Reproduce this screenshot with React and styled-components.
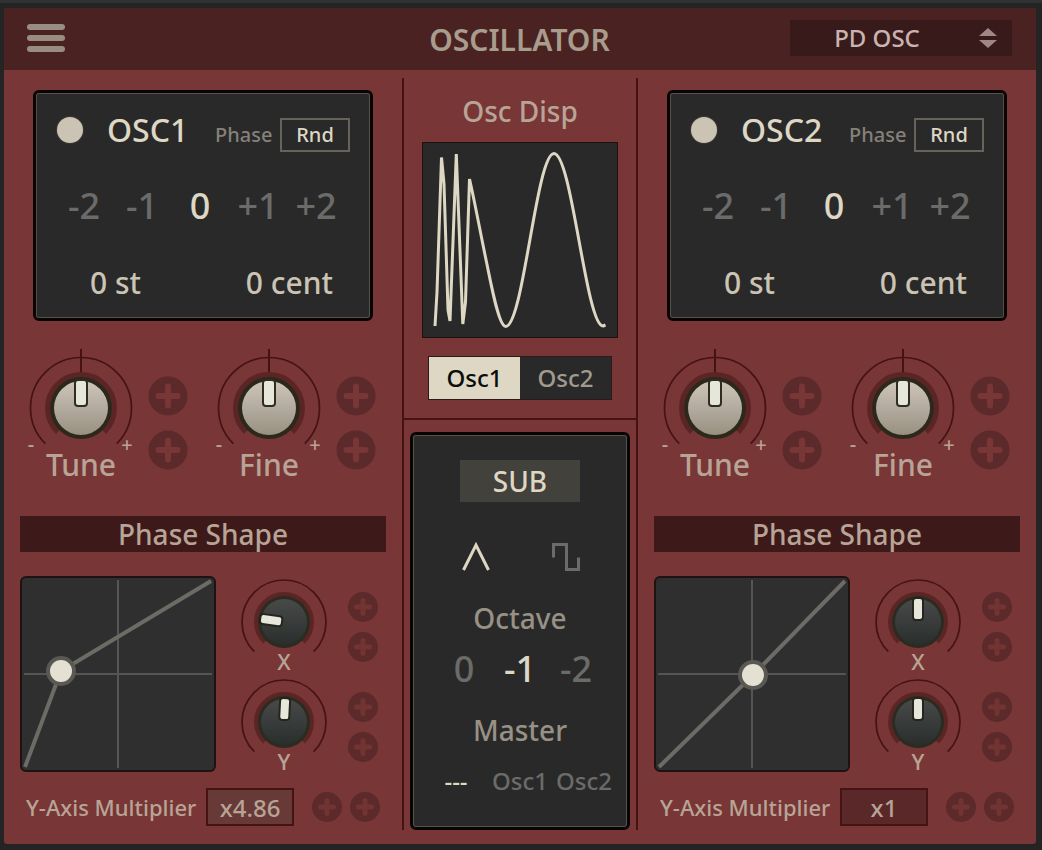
import React, { useState } from 'react';
import styled, { createGlobalStyle, css } from 'styled-components';

const c = {
  red: '#793636',
  redDark: '#5c2a2a',
  header: '#4a2222',
  line: '#461313',
  panel: '#292929',
  cream: '#ddd7c4',
  creamDim: '#cbc3b3',
  label: '#b8a496',
  grey: '#6b6b69',
};

const GlobalStyle = createGlobalStyle`
  *, *::before, *::after { box-sizing: border-box; }
  body {
    margin: 0;
    background: #242424;
    font-family: "Noto Sans", "Open Sans", sans-serif;
    font-weight: 500;
    color: ${c.label};
  }
  button, select, input { font: inherit; color: inherit; margin: 0; }
  button { border: 0; padding: 0; background: none; cursor: pointer; }
  svg { display: block; overflow: visible; }
  fieldset { border: 0; margin: 0; padding: 0; min-width: 0; }
`;

const Page = styled.div`
  min-height: 100vh;
  padding: 5px 6px 6px 4px;
  border-top: 3px solid #2e3232;
`;

const Module = styled.main`
  min-width: 1032px;
  background: ${c.red};
  border-radius: 0 0 3px 3px;
`;

const Header = styled.header`
  display: grid;
  grid-template-columns: 1fr auto 1fr;
  align-items: center;
  height: 62px;
  padding: 0 24px 2px 23px;
  background: ${c.header};
`;

const MenuButton = styled.button`
  display: flex;
  flex-direction: column;
  gap: 5px;
  width: 38px;

  span {
    height: 6px;
    border-radius: 3px;
    background: #988d80;
  }
`;

const Title = styled.h1`
  margin: 0;
  padding-top: 3px;
  font-size: 30px;
  line-height: 36px;
  font-weight: 600;
  color: #a89c8c;
`;

const SelectBox = styled.div`
  position: relative;
  justify-self: end;
  width: 222px;

  select {
    display: block;
    width: 100%;
    height: 36px;
    padding: 0 48px 0 0;
    border: 0;
    border-radius: 0;
    appearance: none;
    background: #381a1a;
    color: #c8b4b0;
    font-size: 24px;
    line-height: 36px;
    text-align: center;
    text-align-last: center;
  }

  svg {
    position: absolute;
    top: 8px;
    right: 15px;
    pointer-events: none;
  }
`;

const Columns = styled.div`
  display: grid;
  grid-template-columns: 1fr 236px 1fr;
  padding-bottom: 14px;
`;

const OscColumn = styled.section`
  display: flex;
  flex-direction: column;
  padding: 20px 16px 0;
`;

const CenterColumn = styled.section`
  display: flex;
  flex-direction: column;
  align-items: center;
  margin-top: 8px;
  border-left: 2px solid ${c.line};
  border-right: 2px solid ${c.line};
`;

const panelFrame = css`
  background: ${c.panel};
  border: 2px solid #080404;
  border-radius: 6px;
  box-shadow: inset 0 0 0 1px #080404, inset 0 0 0 2px #56504b;
`;

const OscPanel = styled.div`
  ${panelFrame}
  height: 231px;
  margin: 0 13px;
  padding: 20px 20px 0;
`;

const OscHead = styled.div`
  display: flex;
  align-items: center;
  height: 36px;
  padding-left: 2px;
`;

const Power = styled.input`
  appearance: none;
  width: 26px;
  height: 26px;
  border-radius: 50%;
  background: ${c.creamDim};
  box-shadow: 0 0 0 1px #3c3934;
  opacity: ${(p) => (p.checked ? 1 : 0.4)};
`;

const OscName = styled.label`
  width: 132px;
  padding-left: 24px;
  font-size: 32px;
  line-height: 36px;
  color: ${c.cream};
`;

const PhaseLabel = styled.span`
  width: 65px;
  padding-top: 10px;
  font-size: 20px;
  line-height: 26px;
  color: #85817a;
`;

const RndButton = styled.button`
  width: 70px;
  height: 34px;
  margin-top: 10px;
  border: 2px solid #67635b;
  font-size: 20px;
  line-height: 30px;
  color: ${c.cream};
`;

const Choices = styled.fieldset`
  display: grid;
  grid-template-columns: repeat(${(p) => p.$count}, ${(p) => p.$pitch}px);
  justify-content: ${(p) => p.$align || 'center'};
  font-size: ${(p) => p.$size}px;
  line-height: 44px;
`;

const Choice = styled.label`
  position: relative;
  display: grid;
  place-items: center;
  height: 44px;
  white-space: nowrap;
  cursor: pointer;
  color: ${(p) => (p.$on ? c.cream : c.grey)};

  input {
    position: absolute;
    inset: 0;
    width: 100%;
    height: 100%;
    opacity: 0;
  }
`;

const OctaveArea = styled.div`
  margin-top: 36px;
`;

const TuneValues = styled.div`
  display: flex;
  justify-content: space-between;
  margin-top: 37px;
  padding: 0 18px 0 35px;
  font-size: 30px;
  line-height: 36px;
  color: ${c.creamDim};
`;

const KnobRow = styled.div`
  display: flex;
  justify-content: space-between;
  margin-top: 26px;
  padding: 0 10px 0 9px;
`;

const KnobGroup = styled.div`
  display: flex;
  gap: ${(p) => p.$gap}px;
`;

const KnobLabel = styled.label`
  position: relative;
  display: block;
  text-align: center;
  font-size: ${(p) => (p.$small ? 22 : 30)}px;
  line-height: ${(p) => (p.$small ? 18 : 36)}px;

  input {
    position: absolute;
    inset: 0;
    width: 100%;
    height: 100%;
    opacity: 0;
    cursor: pointer;
  }
`;

const PlusColumn = styled.div`
  display: flex;
  flex-direction: column;
  gap: ${(p) => p.$gap}px;
  padding-top: ${(p) => p.$top}px;
`;

const SectionBar = styled.h2`
  margin: 33px 0 24px;
  height: 36px;
  background: #3d1a19;
  font-size: 28px;
  line-height: 36px;
  font-weight: 500;
  text-align: center;
`;

const ShapeRow = styled.div`
  display: flex;
  align-items: flex-start;
  gap: 25px;
  height: 196px;
`;

const PadFrame = styled.div`
  width: 196px;
  height: 196px;
  border: 2px solid #1f1212;
  border-radius: 6px;
  background: #2f2f2f;
`;

const SmallKnobs = styled.div`
  display: flex;
  flex-direction: column;
  gap: 8px;
  padding-top: 2px;
`;

const MultiplierRow = styled.div`
  display: flex;
  align-items: center;
  margin-top: 16px;
  padding-left: 6px;
`;

const MultiplierLabel = styled.label`
  width: 180px;
  font-size: 22px;
  line-height: 38px;
`;

const MultiplierInput = styled.input`
  width: 88px;
  height: 38px;
  padding: 0;
  border: 2px solid ${c.line};
  border-radius: 0;
  background: ${(p) => (p.$lit ? '#673a38' : '#5a2828')};
  font-size: 24px;
  line-height: 34px;
  text-align: center;
`;

const PlusPair = styled.div`
  display: flex;
  gap: 8px;
  margin-left: 18px;
`;

const DisplayTitle = styled.h2`
  margin: 15px 0 13px;
  font-size: 28px;
  line-height: 36px;
  font-weight: 500;
`;

const Scope = styled.div`
  width: 196px;
  height: 196px;
  border: 1px solid #1f1010;
  background: ${c.panel};
`;

const Tabs = styled.div`
  display: grid;
  grid-template-columns: 1fr 1fr;
  width: 184px;
  height: 44px;
  margin-top: 18px;
  border: 1px solid #2b1a1a;
  background: ${c.panel};
`;

const Tab = styled.button`
  font-size: 24px;
  line-height: 42px;
  background: ${(p) => (p.$on ? c.cream : c.panel)};
  color: ${(p) => (p.$on ? '#0c0c0a' : '#a09b90')};
`;

const Divider = styled.hr`
  width: 100%;
  height: 2px;
  margin: 18px 0 12px;
  border: 0;
  background: ${c.line};
`;

const SubPanel = styled.div`
  ${panelFrame}
  display: flex;
  flex-direction: column;
  align-items: center;
  width: 220px;
  height: 398px;
  padding-top: 26px;
`;

const SubButton = styled.button`
  width: 120px;
  height: 42px;
  margin-bottom: 33px;
  background: #43413b;
  font-size: 28px;
  line-height: 42px;
  color: ${c.cream};
`;

const SubHeading = styled.h3`
  margin: 21px 0 11px;
  font-size: 28px;
  line-height: 36px;
  font-weight: 500;
  color: #989185;
`;

const polar = (cx, cy, r, deg) => {
  const a = ((deg - 90) * Math.PI) / 180;
  return `${(cx + r * Math.cos(a)).toFixed(2)} ${(cy + r * Math.sin(a)).toFixed(2)}`;
};

const arc = (cx, cy, r, from, to) =>
  `M${polar(cx, cy, r, from)} A${r} ${r} 0 1 1 ${polar(cx, cy, r, to)}`;

function BigKnob({ label, id }) {
  return (
    <KnobLabel>
      <svg width="104" height="100" viewBox="0 0 104 100" aria-hidden="true">
        <defs>
          <linearGradient id={`${id}-face`} x1="0" y1="0" x2="0" y2="1">
            <stop offset="0" stopColor="#cdc6b8" />
            <stop offset="0.5" stopColor="#b3ab9f" />
            <stop offset="1" stopColor="#98907f" />
          </linearGradient>
        </defs>
        <path d={arc(52, 61, 50.5, -135, 135)} fill="none" stroke={c.line} strokeWidth="1.7" />
        <path d="M52 2V26" stroke={c.line} strokeWidth="2" />
        <path d={arc(52, 61, 33, -136, 136)} fill="none" stroke="#5c2525" strokeWidth="6" />
        <circle cx="52" cy="61" r="31" fill="#2c291c" />
        <circle cx="52" cy="61" r="27" fill={`url(#${id}-face)`} />
        <rect x="46" y="33" width="12" height="26" rx="3" fill="#e6e6da" stroke="#2f2c20" strokeWidth="2" />
        <g fill={c.label} fontSize="20" textAnchor="middle">
          <text x="2" y="104">-</text>
          <text x="98" y="105">+</text>
        </g>
      </svg>
      {label}
      <input type="range" min="-100" max="100" defaultValue="0" />
    </KnobLabel>
  );
}

function SmallKnob({ label, id, angle }) {
  return (
    <KnobLabel $small>
      <svg width="86" height="74" viewBox="0 0 86 74" aria-hidden="true">
        <defs>
          <linearGradient id={`${id}-face`} x1="0" y1="0" x2="0" y2="1">
            <stop offset="0" stopColor="#484a4a" />
            <stop offset="1" stopColor="#292e2c" />
          </linearGradient>
        </defs>
        <path d={arc(43, 44, 42, -135, 135)} fill="none" stroke={c.line} strokeWidth="1.7" />
        <path d={arc(43, 44, 27, -136, 136)} fill="none" stroke="#5c2525" strokeWidth="6" />
        <circle cx="43" cy="44" r="26" fill="#2b2c1f" />
        <circle cx="43" cy="44" r="23" fill={`url(#${id}-face)`} />
        <rect
          x="38" y="20" width="10" height="22" rx="3"
          fill="#e6e6da" stroke="#24251c" strokeWidth="2"
          transform={`rotate(${angle} 43 44)`}
        />
      </svg>
      {label}
      <input type="range" min="-135" max="135" defaultValue={angle} />
    </KnobLabel>
  );
}

function Plus({ size, label }) {
  const big = size > 30;
  return (
    <button type="button" aria-label={label}>
      <svg width={size} height={size} viewBox={`0 0 ${size} ${size}`}>
        <circle cx={size / 2} cy={size / 2} r={big ? 19.5 : 15} fill={c.redDark} />
        <path
          d={big ? 'M20 10.5V29.5M10.5 20H29.5' : 'M15 8.5V21.5M8.5 15H21.5'}
          stroke={big ? c.red : '#723333'}
          strokeWidth={big ? 6 : 5}
          strokeLinecap="round"
        />
      </svg>
    </button>
  );
}

function ChoiceSet({ name, label, options, initial, pitch, size, align }) {
  const [value, setValue] = useState(initial);
  return (
    <Choices $count={options.length} $pitch={pitch} $size={size} $align={align} aria-label={label}>
      {options.map((o) => {
        const key = o.key || o;
        return (
          <Choice key={key} $on={value === key}>
            {o.icon || o}
            <input
              type="radio"
              name={name}
              aria-label={key}
              checked={value === key}
              onChange={() => setValue(key)}
            />
          </Choice>
        );
      })}
    </Choices>
  );
}

function PhasePad({ x, y }) {
  return (
    <PadFrame>
      <svg width="192" height="192" viewBox="2 2 192 192" role="img" aria-label="Phase shape curve">
        <path d="M98 4V192M4 98H192" stroke="#555553" strokeWidth="2" />
        <path d={`M5 191L${x} ${y}L191 5`} fill="none" stroke="#6d6b65" strokeWidth="4" />
        <circle cx={x} cy={y} r="15" fill="#5a5852" />
        <circle cx={x} cy={y} r="11" fill="#e4e0d2" />
      </svg>
    </PadFrame>
  );
}

function Oscillator({ n, node, xAngle, yAngle, multiplier, lit }) {
  const id = `osc${n}`;
  const [on, setOn] = useState(true);
  return (
    <OscColumn>
      <OscPanel>
        <OscHead>
          <Power id={`${id}-power`} type="checkbox" checked={on} onChange={() => setOn(!on)} />
          <OscName htmlFor={`${id}-power`}>OSC{n}</OscName>
          <PhaseLabel id={`${id}-phase`}>Phase</PhaseLabel>
          <RndButton type="button">Rnd</RndButton>
        </OscHead>
        <OctaveArea>
          <ChoiceSet
            name={`${id}-octave`}
            label="Octave"
            options={['-2', '-1', '0', '+1', '+2']}
            initial="0"
            pitch={58}
            size={36}
            align="start"
          />
        </OctaveArea>
        <TuneValues>
          <span>0 st</span>
          <span>0 cent</span>
        </TuneValues>
      </OscPanel>

      <KnobRow>
        {['Tune', 'Fine'].map((name) => (
          <KnobGroup key={name} $gap={15}>
            <BigKnob label={name} id={`${id}-${name}`} />
            <PlusColumn $gap={14} $top={29}>
              <Plus size={40} label={`Add ${name} modulation 1`} />
              <Plus size={40} label={`Add ${name} modulation 2`} />
            </PlusColumn>
          </KnobGroup>
        ))}
      </KnobRow>

      <SectionBar>Phase Shape</SectionBar>

      <ShapeRow>
        <PhasePad x={node[0]} y={node[1]} />
        <SmallKnobs>
          {[['X', xAngle], ['Y', yAngle]].map(([name, angle]) => (
            <KnobGroup key={name} $gap={21}>
              <SmallKnob label={name} id={`${id}-${name}`} angle={angle} />
              <PlusColumn $gap={10} $top={14}>
                <Plus size={30} label={`Add ${name} modulation 1`} />
                <Plus size={30} label={`Add ${name} modulation 2`} />
              </PlusColumn>
            </KnobGroup>
          ))}
        </SmallKnobs>
      </ShapeRow>

      <MultiplierRow>
        <MultiplierLabel htmlFor={`${id}-mult`}>Y-Axis Multiplier</MultiplierLabel>
        <MultiplierInput id={`${id}-mult`} type="text" defaultValue={multiplier} $lit={lit} />
        <PlusPair>
          <Plus size={30} label="Add multiplier modulation 1" />
          <Plus size={30} label="Add multiplier modulation 2" />
        </PlusPair>
      </MultiplierRow>
    </OscColumn>
  );
}

const triangleIcon = (
  <svg width="28" height="30" viewBox="0 0 28 30" fill="none" stroke="currentColor" strokeWidth="3">
    <path d="M2.5 28L15 3L27.5 28" />
  </svg>
);

const squareIcon = (
  <svg width="28" height="30" viewBox="0 0 28 30" fill="none" stroke="currentColor" strokeWidth="3">
    <path d="M2.5 15.5V2.5H15.5V27.5H27.5V15.5" />
  </svg>
);

function Center() {
  const [shown, setShown] = useState(1);
  return (
    <CenterColumn>
      <DisplayTitle>Osc Disp</DisplayTitle>
      <Scope>
        <svg width="194" height="194" viewBox="1 1 194 194" role="img" aria-label="Oscillator waveform">
          <path
            d="M13 184L15 150L19.5 15.5L22 42L26 168L28 179L34.3 12L40.8 182L43.5 160L47.5 37C52 56 59 94 64.7 121C70 147 77 184.5 83.7 184.5C101.3 184.5 114.4 11.5 132 11.5C149.9 11.5 164 184 181 184L183.5 183"
            fill="none"
            stroke={c.cream}
            strokeWidth="3"
            strokeLinejoin="bevel"
          />
        </svg>
      </Scope>
      <Tabs>
        {[1, 2].map((n) => (
          <Tab key={n} type="button" aria-pressed={shown === n} $on={shown === n} onClick={() => setShown(n)}>
            Osc{n}
          </Tab>
        ))}
      </Tabs>
      <Divider />
      <SubPanel>
        <SubButton type="button">SUB</SubButton>
        <ChoiceSet
          name="sub-wave"
          label="Sub waveform"
          options={[{ key: 'Triangle', icon: triangleIcon }, { key: 'Square', icon: squareIcon }]}
          initial="Triangle"
          pitch={90}
          size={24}
        />
        <SubHeading>Octave</SubHeading>
        <ChoiceSet name="sub-octave" label="Sub octave" options={['0', '-1', '-2']} initial="-1" pitch={56} size={36} />
        <SubHeading>Master</SubHeading>
        <ChoiceSet name="sub-master" label="Master" options={['---', 'Osc1', 'Osc2']} initial="---" pitch={64} size={24} />
      </SubPanel>
    </CenterColumn>
  );
}

export default function App() {
  return (
    <>
      <GlobalStyle />
      <Page>
        <Module>
          <Header>
            <MenuButton type="button" aria-label="Menu">
              <span />
              <span />
              <span />
            </MenuButton>
            <Title>OSCILLATOR</Title>
            <SelectBox>
              <select aria-label="Oscillator type" defaultValue="PD OSC">
                <option>PD OSC</option>
              </select>
              <svg width="18" height="20" viewBox="0 0 18 20" fill="#a08684" aria-hidden="true">
                <path d="M9 0L18 8H0ZM0 12H18L9 20Z" />
              </svg>
            </SelectBox>
          </Header>
          <Columns>
            <Oscillator n={1} node={[41, 95]} xAngle={-82} yAngle={3} multiplier="x4.86" lit />
            <Center />
            <Oscillator n={2} node={[99, 99]} xAngle={0} yAngle={0} multiplier="x1" />
          </Columns>
        </Module>
      </Page>
    </>
  );
}
